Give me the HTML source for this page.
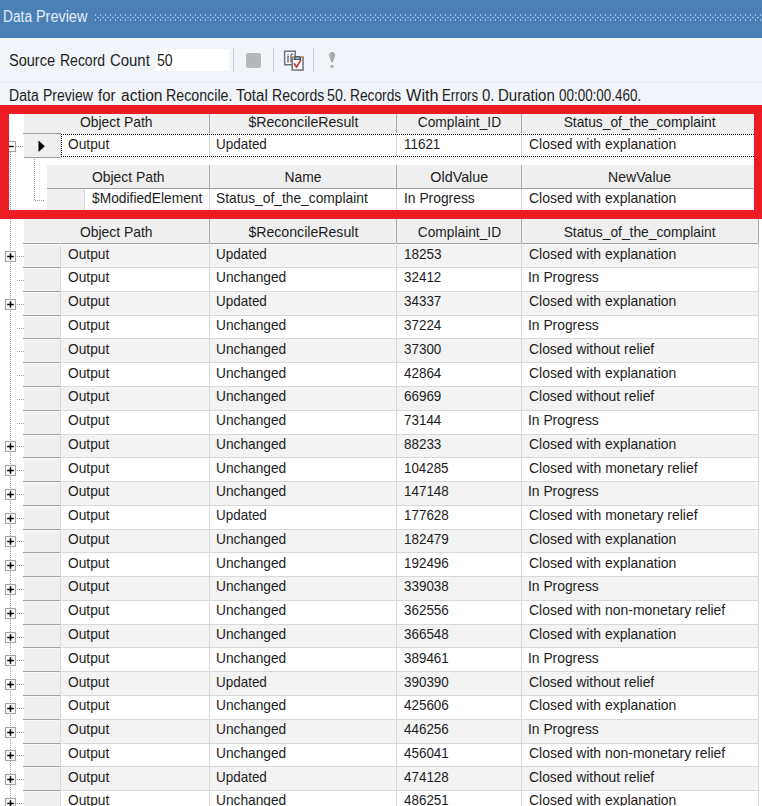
<!DOCTYPE html>
<html><head><meta charset="utf-8"><style>
html,body{margin:0;padding:0;width:762px;height:806px;overflow:hidden;background:#fff}
body{position:relative}
div,span,svg{position:absolute}
span,i{white-space:nowrap;line-height:16px;font-family:"Liberation Sans",sans-serif;font-style:normal;font-size:15px;transform-origin:0 0}
.cw{text-align:center;height:16px}
.cw i{display:inline-block;position:static;transform-origin:50% 0}
.g{color:#1c1c1c}
</style></head><body>
<div style="left:0px;top:0px;width:762px;height:38px;background:#4b80b7;"></div>
<span style="left:2.64px;top:8.5px;transform:scaleX(0.8606);color:#e2ecf7;font-size:16px">Data</span>
<span style="left:36.1px;top:8.5px;transform:scaleX(0.9018);color:#e2ecf7;font-size:16px">Preview</span>
<svg style="left:0;top:0" width="762" height="38"><defs><pattern id="dp" x="0" y="0" width="5" height="38" patternUnits="userSpaceOnUse"><rect x="0" y="14" width="1" height="2" fill="#9ec6ee"/><rect x="2" y="17" width="2" height="1" fill="#9ec6ee"/><rect x="0" y="19" width="1" height="2" fill="#9ec6ee"/></pattern></defs><rect x="95" y="0" width="667" height="38" fill="url(#dp)"/></svg>
<div style="left:0px;top:38px;width:762px;height:67px;background:#f1f4f8;"></div>
<div style="left:0px;top:82px;width:762px;height:1px;background:#e8ebef;"></div>
<span style="left:9.34px;top:52.5px;transform:scaleX(0.9082);color:#1e1e1e;font-size:16px">Source</span>
<span style="left:59.73px;top:52.5px;transform:scaleX(0.874);color:#1e1e1e;font-size:16px">Record</span>
<span style="left:109.6px;top:52.5px;transform:scaleX(0.9326);color:#1e1e1e;font-size:16px">Count</span>
<div style="left:156px;top:49px;width:73px;height:22px;background:#ffffff;"></div>
<span class="t" style="left:156.62px;top:52.5px;transform:scaleX(0.8765);color:#1e1e1e;font-size:16px">50</span>
<div style="left:232.5px;top:48px;width:1.5px;height:24px;background:#c9ccd0;"></div>
<div style="left:272.5px;top:48px;width:1.5px;height:24px;background:#c9ccd0;"></div>
<div style="left:312.5px;top:48px;width:1.5px;height:24px;background:#c9ccd0;"></div>
<div style="left:246px;top:53px;width:15px;height:15px;background:#b5b7b9;border-radius:2.5px"></div>
<svg style="left:282px;top:48px" width="24" height="24" viewBox="0 0 24 24">
<rect x="2.65" y="3.25" width="10.6" height="13.5" fill="#fff" stroke="#6b737c" stroke-width="1.5"/>
<rect x="5.1" y="7.6" width="1.8" height="7" fill="#7d848c"/><rect x="5.1" y="6.1" width="1.8" height="1" fill="#9aa0a6"/>
<path d="M9 14.6 V7.2 q0 -1 1.2 -1 h1" stroke="#7d848c" stroke-width="1.7" fill="none"/>
<rect x="10.15" y="8.95" width="10.9" height="13.1" fill="#fff" stroke="#6b737c" stroke-width="1.5"/>
<path d="M9.4 8.7 h3 M18.6 8.7 h3.2" stroke="#e2a25e" stroke-width="1.3"/>
<path d="M12.2 11.4 C12.2 7.6 18.6 7.6 18.6 11.4 Z" fill="#c4d4e4" stroke="#454b52" stroke-width="1.3"/>
<path d="M12.1 15.3 L14.5 19 L19 11.9" stroke="#d42630" stroke-width="1.6" fill="none"/>
</svg>
<svg style="left:326px;top:50px" width="12" height="20" viewBox="0 0 12 20">
<defs><linearGradient id="eg" x1="0" y1="0" x2="1" y2="0"><stop offset="0" stop-color="#c4c6c8"/><stop offset="0.55" stop-color="#a2a4a7"/><stop offset="1" stop-color="#b4b6b8"/></linearGradient></defs>
<path d="M2.7 4.6 C2.7 1.2 9.3 1.2 9.3 4.6 C9.3 7 7.3 9.8 6.7 12.6 h-1.4 C4.7 9.8 2.7 7 2.7 4.6 Z" fill="url(#eg)"/>
<ellipse cx="6.1" cy="16.4" rx="1.75" ry="1.45" fill="#a6a8ab"/>
</svg>
<span style="left:8.92px;top:87.5px;transform:scaleX(0.8788);color:#1e1e1e;font-size:16px">Data</span>
<span style="left:42.92px;top:87.5px;transform:scaleX(0.8768);color:#1e1e1e;font-size:16px">Preview</span>
<span style="left:97.9px;top:87.5px;transform:scaleX(0.9368);color:#1e1e1e;font-size:16px">for</span>
<span style="left:120.7px;top:87.5px;transform:scaleX(0.9714);color:#1e1e1e;font-size:16px">action</span>
<span style="left:165.61px;top:87.5px;transform:scaleX(0.889);color:#1e1e1e;font-size:16px">Reconcile.</span>
<span style="left:236.4px;top:87.5px;transform:scaleX(0.9394);color:#1e1e1e;font-size:16px">Total</span>
<span style="left:271.52px;top:87.5px;transform:scaleX(0.8776);color:#1e1e1e;font-size:16px">Records</span>
<span style="left:327.41px;top:87.5px;transform:scaleX(0.89);color:#1e1e1e;font-size:16px">50.</span>
<span style="left:350.24px;top:87.5px;transform:scaleX(0.8586);color:#1e1e1e;font-size:16px">Records</span>
<span style="left:405.9px;top:87.5px;transform:scaleX(1.0194);color:#1e1e1e;font-size:16px">With</span>
<span style="left:441.67px;top:87.5px;transform:scaleX(0.831);color:#1e1e1e;font-size:16px">Errors</span>
<span style="left:482.4px;top:87.5px;transform:scaleX(0.9333);color:#1e1e1e;font-size:16px">0.</span>
<span style="left:497.66px;top:87.5px;transform:scaleX(0.939);color:#1e1e1e;font-size:16px">Duration</span>
<span style="left:559.0px;top:87.5px;transform:scaleX(0.8392);color:#1e1e1e;font-size:16px">00:00:00.460.</span>
<div style="left:9px;top:114px;width:745px;height:96px;background:#ffffff;"></div>
<div style="left:24px;top:114px;width:735px;height:19px;background:#efefef;"></div>
<div style="left:24px;top:133px;width:735px;height:1px;background:#f6f6f6;"></div>
<div style="left:23px;top:133px;width:38px;height:1px;background:#a0a0a0;"></div>
<div style="left:209px;top:114px;width:1px;height:19px;background:#aaaaaa;"></div>
<div style="left:396px;top:114px;width:1px;height:19px;background:#aaaaaa;"></div>
<div style="left:521px;top:114px;width:1px;height:19px;background:#aaaaaa;"></div>
<div class="cw" style="left:24px;width:185px;top:112.5px"><i class="g" style="transform:scaleX(0.9256)">Object Path</i></div>
<div class="cw" style="left:210px;width:186px;top:112.5px"><i class="g" style="transform:scaleX(0.9419)">$ReconcileResult</i></div>
<div class="cw" style="left:397px;width:124px;top:112.5px"><i class="g" style="transform:scaleX(0.9165)">Complaint_ID</i></div>
<div class="cw" style="left:522px;width:236px;top:112.5px"><i class="g" style="transform:scaleX(0.9195)">Status_of_the_complaint</i></div>
<div style="left:24px;top:134px;width:36px;height:23px;background:#efefef;"></div>
<div style="left:24px;top:157px;width:36px;height:1px;background:#a0a0a0;"></div>
<div style="left:60px;top:134px;width:1px;height:24px;background:#d8d8d8;"></div>
<svg style="left:38px;top:140px" width="8" height="13"><path d="M0.5 0.5 L6.8 6.2 L0.5 12 Z" fill="#000"/></svg>
<div style="left:209px;top:134px;width:1px;height:23px;background:#d8d8d8;"></div>
<div style="left:396px;top:134px;width:1px;height:23px;background:#d8d8d8;"></div>
<div style="left:521px;top:134px;width:1px;height:23px;background:#d8d8d8;"></div>
<div style="left:61px;top:134px;width:700px;height:1px;background:repeating-linear-gradient(90deg,#000 0 1px,transparent 1px 2px)"></div>
<div style="left:61px;top:156px;width:700px;height:1px;background:repeating-linear-gradient(90deg,#000 0 1px,transparent 1px 2px)"></div>
<div style="left:61px;top:134px;width:1px;height:23px;background:repeating-linear-gradient(180deg,#000 0 1px,transparent 1px 2px)"></div>
<span class="g" style="left:68.0px;top:136.2px;transform:scaleX(0.9156);">Output</span>
<span class="g" style="left:216.1px;top:136.2px;transform:scaleX(0.8964);">Updated</span>
<span class="g" style="left:403.91px;top:136.2px;transform:scaleX(0.895);">11621</span>
<span class="g" style="left:529.0px;top:136.2px;transform:scaleX(0.9297);">Closed with explanation</span>
<svg style="left:4px;top:140px" width="13" height="13"><rect x="1.5" y="1.5" width="10" height="10" fill="#fff" stroke="#a4a4a4" stroke-width="1.1"/><path d="M3.2 6.5 H9.8" stroke="#000" stroke-width="1.4"/></svg>
<div style="left:47px;top:165px;width:707px;height:23px;background:#efefef;"></div>
<div style="left:47px;top:188px;width:707px;height:1px;background:#a0a0a0;"></div>
<div style="left:209px;top:165px;width:1px;height:23px;background:#aaaaaa;"></div>
<div style="left:396px;top:165px;width:1px;height:23px;background:#aaaaaa;"></div>
<div style="left:521px;top:165px;width:1px;height:23px;background:#aaaaaa;"></div>
<div class="cw" style="left:47px;width:162px;top:168px"><i class="g" style="transform:scaleX(0.9256)">Object Path</i></div>
<div class="cw" style="left:210px;width:186px;top:168px"><i class="g" style="transform:scaleX(0.9205)">Name</i></div>
<div class="cw" style="left:397px;width:124px;top:168px"><i class="g" style="transform:scaleX(0.955)">OldValue</i></div>
<div class="cw" style="left:522px;width:236px;top:168px"><i class="g" style="transform:scaleX(0.9379)">NewValue</i></div>
<div style="left:47px;top:189px;width:37px;height:21px;background:#efefef;"></div>
<div style="left:84px;top:189px;width:1px;height:21px;background:#d8d8d8;"></div>
<div style="left:209px;top:189px;width:1px;height:21px;background:#d8d8d8;"></div>
<div style="left:396px;top:189px;width:1px;height:21px;background:#d8d8d8;"></div>
<div style="left:521px;top:189px;width:1px;height:21px;background:#d8d8d8;"></div>
<span class="g" style="left:91.5px;top:190px;transform:scaleX(0.9192);">$ModifiedElement</span>
<span class="g" style="left:216.08px;top:190px;transform:scaleX(0.9195);">Status_of_the_complaint</span>
<span class="g" style="left:403.88px;top:190px;transform:scaleX(0.9224);">In Progress</span>
<span class="g" style="left:529.0px;top:190px;transform:scaleX(0.9297);">Closed with explanation</span>
<div style="left:10px;top:152px;width:1px;height:60px;background:repeating-linear-gradient(180deg,#a0a0a0 0 1px,transparent 1px 2px)"></div>
<div style="left:16px;top:146px;width:7px;height:1px;background:repeating-linear-gradient(90deg,#a0a0a0 0 1px,transparent 1px 2px)"></div>
<div style="left:34px;top:159px;width:1px;height:42px;background:repeating-linear-gradient(180deg,#a0a0a0 0 1px,transparent 1px 2px)"></div>
<div style="left:35px;top:200px;width:10px;height:1px;background:repeating-linear-gradient(90deg,#a0a0a0 0 1px,transparent 1px 2px)"></div>
<div style="left:0px;top:105px;width:762px;height:9px;background:#ec1c24;"></div>
<div style="left:0px;top:210px;width:762px;height:9px;background:#ec1c24;"></div>
<div style="left:0px;top:105px;width:9px;height:114px;background:#ec1c24;"></div>
<div style="left:754px;top:105px;width:8px;height:114px;background:#ec1c24;"></div>
<div style="left:0px;top:219px;width:762px;height:587px;background:#ffffff;"></div>
<div style="left:24px;top:219px;width:735px;height:24px;background:#efefef;"></div>
<div style="left:758px;top:219px;width:1px;height:24px;background:#aaaaaa;"></div>
<div style="left:209px;top:219px;width:1px;height:24px;background:#aaaaaa;"></div>
<div style="left:396px;top:219px;width:1px;height:24px;background:#aaaaaa;"></div>
<div style="left:521px;top:219px;width:1px;height:24px;background:#aaaaaa;"></div>
<div style="left:24px;top:243px;width:735px;height:1px;background:#a0a0a0;"></div>
<div class="cw" style="left:24px;width:185px;top:222.5px"><i class="g" style="transform:scaleX(0.9256)">Object Path</i></div>
<div class="cw" style="left:210px;width:186px;top:222.5px"><i class="g" style="transform:scaleX(0.9419)">$ReconcileResult</i></div>
<div class="cw" style="left:397px;width:124px;top:222.5px"><i class="g" style="transform:scaleX(0.9165)">Complaint_ID</i></div>
<div class="cw" style="left:522px;width:236px;top:222.5px"><i class="g" style="transform:scaleX(0.9195)">Status_of_the_complaint</i></div>
<div style="left:10px;top:219px;width:1px;height:590px;background:repeating-linear-gradient(180deg,#a0a0a0 0 1px,transparent 1px 2px)"></div>
<div style="left:24px;top:243px;width:36px;height:24px;background:#efefef;"></div>
<div style="left:24px;top:244px;width:36px;height:1px;background:#f8f8f8;"></div>
<div style="left:22.5px;top:243px;width:37.5px;height:1px;background:#a0a0a0;"></div>
<div style="left:60px;top:243px;width:1px;height:24px;background:#d8d8d8;"></div>
<div style="left:61px;top:243px;width:697px;height:24px;background:#f3f3f3;"></div>
<div style="left:61px;top:243px;width:697px;height:1px;background:#a0a0a0;"></div>
<div style="left:24px;top:244px;width:735px;height:1px;background:#f9f9f9;"></div>
<div style="left:209px;top:243px;width:1px;height:24px;background:#d8d8d8;"></div>
<div style="left:396px;top:243px;width:1px;height:24px;background:#d8d8d8;"></div>
<div style="left:521px;top:243px;width:1px;height:24px;background:#d8d8d8;"></div>
<div style="left:758px;top:243px;width:1px;height:24px;background:#d8d8d8;"></div>
<span class="g" style="left:67.6px;top:245.7px;transform:scaleX(0.9156);">Output</span>
<span class="g" style="left:216.1px;top:245.7px;transform:scaleX(0.8964);">Updated</span>
<span class="g" style="left:403.9px;top:245.7px;transform:scaleX(0.9025);">18253</span>
<span class="g" style="left:529.0px;top:245.7px;transform:scaleX(0.9297);">Closed with explanation</span>
<div style="left:17px;top:256px;width:7px;height:1px;background:repeating-linear-gradient(90deg,#a0a0a0 0 1px,transparent 1px 2px)"></div>
<svg style="left:4px;top:250px" width="13" height="13"><rect x="1.5" y="1.5" width="10" height="10" fill="#fff" stroke="#a4a4a4" stroke-width="1.1"/><path d="M3.2 6.5 H9.8 M6.5 3.2 V9.8" stroke="#000" stroke-width="1.55"/></svg>
<div style="left:24px;top:267px;width:36px;height:24px;background:#efefef;"></div>
<div style="left:24px;top:268px;width:36px;height:1px;background:#f8f8f8;"></div>
<div style="left:22.5px;top:267px;width:37.5px;height:1px;background:#a0a0a0;"></div>
<div style="left:60px;top:267px;width:1px;height:24px;background:#d8d8d8;"></div>
<div style="left:61px;top:267px;width:697px;height:24px;background:#ffffff;"></div>
<div style="left:61px;top:267px;width:697px;height:1px;background:#d8d8d8;"></div>
<div style="left:209px;top:267px;width:1px;height:24px;background:#d8d8d8;"></div>
<div style="left:396px;top:267px;width:1px;height:24px;background:#d8d8d8;"></div>
<div style="left:521px;top:267px;width:1px;height:24px;background:#d8d8d8;"></div>
<div style="left:758px;top:267px;width:1px;height:24px;background:#d8d8d8;"></div>
<span class="g" style="left:67.6px;top:269.47px;transform:scaleX(0.9156);">Output</span>
<span class="g" style="left:216.09px;top:269.47px;transform:scaleX(0.9147);">Unchanged</span>
<span class="g" style="left:403.91px;top:269.47px;transform:scaleX(0.895);">32412</span>
<span class="g" style="left:528.08px;top:269.47px;transform:scaleX(0.9224);">In Progress</span>
<div style="left:17px;top:280px;width:7px;height:1px;background:repeating-linear-gradient(90deg,#a0a0a0 0 1px,transparent 1px 2px)"></div>
<div style="left:24px;top:291px;width:36px;height:24px;background:#efefef;"></div>
<div style="left:24px;top:292px;width:36px;height:1px;background:#f8f8f8;"></div>
<div style="left:22.5px;top:291px;width:37.5px;height:1px;background:#a0a0a0;"></div>
<div style="left:60px;top:291px;width:1px;height:24px;background:#d8d8d8;"></div>
<div style="left:61px;top:291px;width:697px;height:24px;background:#f3f3f3;"></div>
<div style="left:61px;top:291px;width:697px;height:1px;background:#d8d8d8;"></div>
<div style="left:209px;top:291px;width:1px;height:24px;background:#d8d8d8;"></div>
<div style="left:396px;top:291px;width:1px;height:24px;background:#d8d8d8;"></div>
<div style="left:521px;top:291px;width:1px;height:24px;background:#d8d8d8;"></div>
<div style="left:758px;top:291px;width:1px;height:24px;background:#d8d8d8;"></div>
<span class="g" style="left:67.6px;top:293.24px;transform:scaleX(0.9156);">Output</span>
<span class="g" style="left:216.1px;top:293.24px;transform:scaleX(0.8964);">Updated</span>
<span class="g" style="left:403.91px;top:293.24px;transform:scaleX(0.895);">34337</span>
<span class="g" style="left:529.0px;top:293.24px;transform:scaleX(0.9297);">Closed with explanation</span>
<div style="left:17px;top:304px;width:7px;height:1px;background:repeating-linear-gradient(90deg,#a0a0a0 0 1px,transparent 1px 2px)"></div>
<svg style="left:4px;top:298px" width="13" height="13"><rect x="1.5" y="1.5" width="10" height="10" fill="#fff" stroke="#a4a4a4" stroke-width="1.1"/><path d="M3.2 6.5 H9.8 M6.5 3.2 V9.8" stroke="#000" stroke-width="1.55"/></svg>
<div style="left:24px;top:315px;width:36px;height:23px;background:#efefef;"></div>
<div style="left:24px;top:316px;width:36px;height:1px;background:#f8f8f8;"></div>
<div style="left:22.5px;top:315px;width:37.5px;height:1px;background:#a0a0a0;"></div>
<div style="left:60px;top:315px;width:1px;height:23px;background:#d8d8d8;"></div>
<div style="left:61px;top:315px;width:697px;height:23px;background:#ffffff;"></div>
<div style="left:61px;top:315px;width:697px;height:1px;background:#d8d8d8;"></div>
<div style="left:209px;top:315px;width:1px;height:23px;background:#d8d8d8;"></div>
<div style="left:396px;top:315px;width:1px;height:23px;background:#d8d8d8;"></div>
<div style="left:521px;top:315px;width:1px;height:23px;background:#d8d8d8;"></div>
<div style="left:758px;top:315px;width:1px;height:23px;background:#d8d8d8;"></div>
<span class="g" style="left:67.6px;top:317.01000000000005px;transform:scaleX(0.9156);">Output</span>
<span class="g" style="left:216.09px;top:317.01000000000005px;transform:scaleX(0.9147);">Unchanged</span>
<span class="g" style="left:403.91px;top:317.01000000000005px;transform:scaleX(0.895);">37224</span>
<span class="g" style="left:528.08px;top:317.01000000000005px;transform:scaleX(0.9224);">In Progress</span>
<div style="left:17px;top:328px;width:7px;height:1px;background:repeating-linear-gradient(90deg,#a0a0a0 0 1px,transparent 1px 2px)"></div>
<div style="left:24px;top:338px;width:36px;height:24px;background:#efefef;"></div>
<div style="left:24px;top:339px;width:36px;height:1px;background:#f8f8f8;"></div>
<div style="left:22.5px;top:338px;width:37.5px;height:1px;background:#a0a0a0;"></div>
<div style="left:60px;top:338px;width:1px;height:24px;background:#d8d8d8;"></div>
<div style="left:61px;top:338px;width:697px;height:24px;background:#f3f3f3;"></div>
<div style="left:61px;top:338px;width:697px;height:1px;background:#d8d8d8;"></div>
<div style="left:209px;top:338px;width:1px;height:24px;background:#d8d8d8;"></div>
<div style="left:396px;top:338px;width:1px;height:24px;background:#d8d8d8;"></div>
<div style="left:521px;top:338px;width:1px;height:24px;background:#d8d8d8;"></div>
<div style="left:758px;top:338px;width:1px;height:24px;background:#d8d8d8;"></div>
<span class="g" style="left:67.6px;top:340.78000000000003px;transform:scaleX(0.9156);">Output</span>
<span class="g" style="left:216.09px;top:340.78000000000003px;transform:scaleX(0.9147);">Unchanged</span>
<span class="g" style="left:403.91px;top:340.78000000000003px;transform:scaleX(0.895);">37300</span>
<span class="g" style="left:529.0px;top:340.78000000000003px;transform:scaleX(0.9272);">Closed without relief</span>
<div style="left:17px;top:351px;width:7px;height:1px;background:repeating-linear-gradient(90deg,#a0a0a0 0 1px,transparent 1px 2px)"></div>
<div style="left:24px;top:362px;width:36px;height:24px;background:#efefef;"></div>
<div style="left:24px;top:363px;width:36px;height:1px;background:#f8f8f8;"></div>
<div style="left:22.5px;top:362px;width:37.5px;height:1px;background:#a0a0a0;"></div>
<div style="left:60px;top:362px;width:1px;height:24px;background:#d8d8d8;"></div>
<div style="left:61px;top:362px;width:697px;height:24px;background:#ffffff;"></div>
<div style="left:61px;top:362px;width:697px;height:1px;background:#d8d8d8;"></div>
<div style="left:209px;top:362px;width:1px;height:24px;background:#d8d8d8;"></div>
<div style="left:396px;top:362px;width:1px;height:24px;background:#d8d8d8;"></div>
<div style="left:521px;top:362px;width:1px;height:24px;background:#d8d8d8;"></div>
<div style="left:758px;top:362px;width:1px;height:24px;background:#d8d8d8;"></div>
<span class="g" style="left:67.6px;top:364.55px;transform:scaleX(0.9156);">Output</span>
<span class="g" style="left:216.09px;top:364.55px;transform:scaleX(0.9147);">Unchanged</span>
<span class="g" style="left:403.91px;top:364.55px;transform:scaleX(0.895);">42864</span>
<span class="g" style="left:529.0px;top:364.55px;transform:scaleX(0.9297);">Closed with explanation</span>
<div style="left:17px;top:375px;width:7px;height:1px;background:repeating-linear-gradient(90deg,#a0a0a0 0 1px,transparent 1px 2px)"></div>
<div style="left:24px;top:386px;width:36px;height:24px;background:#efefef;"></div>
<div style="left:24px;top:387px;width:36px;height:1px;background:#f8f8f8;"></div>
<div style="left:22.5px;top:386px;width:37.5px;height:1px;background:#a0a0a0;"></div>
<div style="left:60px;top:386px;width:1px;height:24px;background:#d8d8d8;"></div>
<div style="left:61px;top:386px;width:697px;height:24px;background:#f3f3f3;"></div>
<div style="left:61px;top:386px;width:697px;height:1px;background:#d8d8d8;"></div>
<div style="left:209px;top:386px;width:1px;height:24px;background:#d8d8d8;"></div>
<div style="left:396px;top:386px;width:1px;height:24px;background:#d8d8d8;"></div>
<div style="left:521px;top:386px;width:1px;height:24px;background:#d8d8d8;"></div>
<div style="left:758px;top:386px;width:1px;height:24px;background:#d8d8d8;"></div>
<span class="g" style="left:67.6px;top:388.32px;transform:scaleX(0.9156);">Output</span>
<span class="g" style="left:216.09px;top:388.32px;transform:scaleX(0.9147);">Unchanged</span>
<span class="g" style="left:403.91px;top:388.32px;transform:scaleX(0.895);">66969</span>
<span class="g" style="left:529.0px;top:388.32px;transform:scaleX(0.9272);">Closed without relief</span>
<div style="left:17px;top:399px;width:7px;height:1px;background:repeating-linear-gradient(90deg,#a0a0a0 0 1px,transparent 1px 2px)"></div>
<div style="left:24px;top:410px;width:36px;height:24px;background:#efefef;"></div>
<div style="left:24px;top:411px;width:36px;height:1px;background:#f8f8f8;"></div>
<div style="left:22.5px;top:410px;width:37.5px;height:1px;background:#a0a0a0;"></div>
<div style="left:60px;top:410px;width:1px;height:24px;background:#d8d8d8;"></div>
<div style="left:61px;top:410px;width:697px;height:24px;background:#ffffff;"></div>
<div style="left:61px;top:410px;width:697px;height:1px;background:#d8d8d8;"></div>
<div style="left:209px;top:410px;width:1px;height:24px;background:#d8d8d8;"></div>
<div style="left:396px;top:410px;width:1px;height:24px;background:#d8d8d8;"></div>
<div style="left:521px;top:410px;width:1px;height:24px;background:#d8d8d8;"></div>
<div style="left:758px;top:410px;width:1px;height:24px;background:#d8d8d8;"></div>
<span class="g" style="left:67.6px;top:412.09px;transform:scaleX(0.9156);">Output</span>
<span class="g" style="left:216.09px;top:412.09px;transform:scaleX(0.9147);">Unchanged</span>
<span class="g" style="left:403.91px;top:412.09px;transform:scaleX(0.895);">73144</span>
<span class="g" style="left:528.08px;top:412.09px;transform:scaleX(0.9224);">In Progress</span>
<div style="left:17px;top:423px;width:7px;height:1px;background:repeating-linear-gradient(90deg,#a0a0a0 0 1px,transparent 1px 2px)"></div>
<div style="left:24px;top:434px;width:36px;height:23px;background:#efefef;"></div>
<div style="left:24px;top:435px;width:36px;height:1px;background:#f8f8f8;"></div>
<div style="left:22.5px;top:434px;width:37.5px;height:1px;background:#a0a0a0;"></div>
<div style="left:60px;top:434px;width:1px;height:23px;background:#d8d8d8;"></div>
<div style="left:61px;top:434px;width:697px;height:23px;background:#f3f3f3;"></div>
<div style="left:61px;top:434px;width:697px;height:1px;background:#d8d8d8;"></div>
<div style="left:209px;top:434px;width:1px;height:23px;background:#d8d8d8;"></div>
<div style="left:396px;top:434px;width:1px;height:23px;background:#d8d8d8;"></div>
<div style="left:521px;top:434px;width:1px;height:23px;background:#d8d8d8;"></div>
<div style="left:758px;top:434px;width:1px;height:23px;background:#d8d8d8;"></div>
<span class="g" style="left:67.6px;top:435.86px;transform:scaleX(0.9156);">Output</span>
<span class="g" style="left:216.09px;top:435.86px;transform:scaleX(0.9147);">Unchanged</span>
<span class="g" style="left:403.91px;top:435.86px;transform:scaleX(0.895);">88233</span>
<span class="g" style="left:529.0px;top:435.86px;transform:scaleX(0.9297);">Closed with explanation</span>
<div style="left:17px;top:446px;width:7px;height:1px;background:repeating-linear-gradient(90deg,#a0a0a0 0 1px,transparent 1px 2px)"></div>
<svg style="left:4px;top:440px" width="13" height="13"><rect x="1.5" y="1.5" width="10" height="10" fill="#fff" stroke="#a4a4a4" stroke-width="1.1"/><path d="M3.2 6.5 H9.8 M6.5 3.2 V9.8" stroke="#000" stroke-width="1.55"/></svg>
<div style="left:24px;top:457px;width:36px;height:24px;background:#efefef;"></div>
<div style="left:24px;top:458px;width:36px;height:1px;background:#f8f8f8;"></div>
<div style="left:22.5px;top:457px;width:37.5px;height:1px;background:#a0a0a0;"></div>
<div style="left:60px;top:457px;width:1px;height:24px;background:#d8d8d8;"></div>
<div style="left:61px;top:457px;width:697px;height:24px;background:#ffffff;"></div>
<div style="left:61px;top:457px;width:697px;height:1px;background:#d8d8d8;"></div>
<div style="left:209px;top:457px;width:1px;height:24px;background:#d8d8d8;"></div>
<div style="left:396px;top:457px;width:1px;height:24px;background:#d8d8d8;"></div>
<div style="left:521px;top:457px;width:1px;height:24px;background:#d8d8d8;"></div>
<div style="left:758px;top:457px;width:1px;height:24px;background:#d8d8d8;"></div>
<span class="g" style="left:67.6px;top:459.63000000000005px;transform:scaleX(0.9156);">Output</span>
<span class="g" style="left:216.09px;top:459.63000000000005px;transform:scaleX(0.9147);">Unchanged</span>
<span class="g" style="left:403.91px;top:459.63000000000005px;transform:scaleX(0.8878);">104285</span>
<span class="g" style="left:529.0px;top:459.63000000000005px;transform:scaleX(0.932);">Closed with monetary relief</span>
<div style="left:17px;top:470px;width:7px;height:1px;background:repeating-linear-gradient(90deg,#a0a0a0 0 1px,transparent 1px 2px)"></div>
<svg style="left:4px;top:464px" width="13" height="13"><rect x="1.5" y="1.5" width="10" height="10" fill="#fff" stroke="#a4a4a4" stroke-width="1.1"/><path d="M3.2 6.5 H9.8 M6.5 3.2 V9.8" stroke="#000" stroke-width="1.55"/></svg>
<div style="left:24px;top:481px;width:36px;height:24px;background:#efefef;"></div>
<div style="left:24px;top:482px;width:36px;height:1px;background:#f8f8f8;"></div>
<div style="left:22.5px;top:481px;width:37.5px;height:1px;background:#a0a0a0;"></div>
<div style="left:60px;top:481px;width:1px;height:24px;background:#d8d8d8;"></div>
<div style="left:61px;top:481px;width:697px;height:24px;background:#f3f3f3;"></div>
<div style="left:61px;top:481px;width:697px;height:1px;background:#d8d8d8;"></div>
<div style="left:209px;top:481px;width:1px;height:24px;background:#d8d8d8;"></div>
<div style="left:396px;top:481px;width:1px;height:24px;background:#d8d8d8;"></div>
<div style="left:521px;top:481px;width:1px;height:24px;background:#d8d8d8;"></div>
<div style="left:758px;top:481px;width:1px;height:24px;background:#d8d8d8;"></div>
<span class="g" style="left:67.6px;top:483.40000000000003px;transform:scaleX(0.9156);">Output</span>
<span class="g" style="left:216.09px;top:483.40000000000003px;transform:scaleX(0.9147);">Unchanged</span>
<span class="g" style="left:403.91px;top:483.40000000000003px;transform:scaleX(0.895);">147148</span>
<span class="g" style="left:528.08px;top:483.40000000000003px;transform:scaleX(0.9224);">In Progress</span>
<div style="left:17px;top:494px;width:7px;height:1px;background:repeating-linear-gradient(90deg,#a0a0a0 0 1px,transparent 1px 2px)"></div>
<svg style="left:4px;top:488px" width="13" height="13"><rect x="1.5" y="1.5" width="10" height="10" fill="#fff" stroke="#a4a4a4" stroke-width="1.1"/><path d="M3.2 6.5 H9.8 M6.5 3.2 V9.8" stroke="#000" stroke-width="1.55"/></svg>
<div style="left:24px;top:505px;width:36px;height:24px;background:#efefef;"></div>
<div style="left:24px;top:506px;width:36px;height:1px;background:#f8f8f8;"></div>
<div style="left:22.5px;top:505px;width:37.5px;height:1px;background:#a0a0a0;"></div>
<div style="left:60px;top:505px;width:1px;height:24px;background:#d8d8d8;"></div>
<div style="left:61px;top:505px;width:697px;height:24px;background:#ffffff;"></div>
<div style="left:61px;top:505px;width:697px;height:1px;background:#d8d8d8;"></div>
<div style="left:209px;top:505px;width:1px;height:24px;background:#d8d8d8;"></div>
<div style="left:396px;top:505px;width:1px;height:24px;background:#d8d8d8;"></div>
<div style="left:521px;top:505px;width:1px;height:24px;background:#d8d8d8;"></div>
<div style="left:758px;top:505px;width:1px;height:24px;background:#d8d8d8;"></div>
<span class="g" style="left:67.6px;top:507.16999999999996px;transform:scaleX(0.9156);">Output</span>
<span class="g" style="left:216.1px;top:507.16999999999996px;transform:scaleX(0.8964);">Updated</span>
<span class="g" style="left:403.91px;top:507.16999999999996px;transform:scaleX(0.895);">177628</span>
<span class="g" style="left:529.0px;top:507.16999999999996px;transform:scaleX(0.932);">Closed with monetary relief</span>
<div style="left:17px;top:518px;width:7px;height:1px;background:repeating-linear-gradient(90deg,#a0a0a0 0 1px,transparent 1px 2px)"></div>
<svg style="left:4px;top:512px" width="13" height="13"><rect x="1.5" y="1.5" width="10" height="10" fill="#fff" stroke="#a4a4a4" stroke-width="1.1"/><path d="M3.2 6.5 H9.8 M6.5 3.2 V9.8" stroke="#000" stroke-width="1.55"/></svg>
<div style="left:24px;top:529px;width:36px;height:23px;background:#efefef;"></div>
<div style="left:24px;top:530px;width:36px;height:1px;background:#f8f8f8;"></div>
<div style="left:22.5px;top:529px;width:37.5px;height:1px;background:#a0a0a0;"></div>
<div style="left:60px;top:529px;width:1px;height:23px;background:#d8d8d8;"></div>
<div style="left:61px;top:529px;width:697px;height:23px;background:#f3f3f3;"></div>
<div style="left:61px;top:529px;width:697px;height:1px;background:#d8d8d8;"></div>
<div style="left:209px;top:529px;width:1px;height:23px;background:#d8d8d8;"></div>
<div style="left:396px;top:529px;width:1px;height:23px;background:#d8d8d8;"></div>
<div style="left:521px;top:529px;width:1px;height:23px;background:#d8d8d8;"></div>
<div style="left:758px;top:529px;width:1px;height:23px;background:#d8d8d8;"></div>
<span class="g" style="left:67.6px;top:530.9399999999999px;transform:scaleX(0.9156);">Output</span>
<span class="g" style="left:216.09px;top:530.9399999999999px;transform:scaleX(0.9147);">Unchanged</span>
<span class="g" style="left:403.91px;top:530.9399999999999px;transform:scaleX(0.895);">182479</span>
<span class="g" style="left:529.0px;top:530.9399999999999px;transform:scaleX(0.9297);">Closed with explanation</span>
<div style="left:17px;top:541px;width:7px;height:1px;background:repeating-linear-gradient(90deg,#a0a0a0 0 1px,transparent 1px 2px)"></div>
<svg style="left:4px;top:535px" width="13" height="13"><rect x="1.5" y="1.5" width="10" height="10" fill="#fff" stroke="#a4a4a4" stroke-width="1.1"/><path d="M3.2 6.5 H9.8 M6.5 3.2 V9.8" stroke="#000" stroke-width="1.55"/></svg>
<div style="left:24px;top:552px;width:36px;height:24px;background:#efefef;"></div>
<div style="left:24px;top:553px;width:36px;height:1px;background:#f8f8f8;"></div>
<div style="left:22.5px;top:552px;width:37.5px;height:1px;background:#a0a0a0;"></div>
<div style="left:60px;top:552px;width:1px;height:24px;background:#d8d8d8;"></div>
<div style="left:61px;top:552px;width:697px;height:24px;background:#ffffff;"></div>
<div style="left:61px;top:552px;width:697px;height:1px;background:#d8d8d8;"></div>
<div style="left:209px;top:552px;width:1px;height:24px;background:#d8d8d8;"></div>
<div style="left:396px;top:552px;width:1px;height:24px;background:#d8d8d8;"></div>
<div style="left:521px;top:552px;width:1px;height:24px;background:#d8d8d8;"></div>
<div style="left:758px;top:552px;width:1px;height:24px;background:#d8d8d8;"></div>
<span class="g" style="left:67.6px;top:554.7099999999999px;transform:scaleX(0.9156);">Output</span>
<span class="g" style="left:216.09px;top:554.7099999999999px;transform:scaleX(0.9147);">Unchanged</span>
<span class="g" style="left:403.91px;top:554.7099999999999px;transform:scaleX(0.895);">192496</span>
<span class="g" style="left:529.0px;top:554.7099999999999px;transform:scaleX(0.9297);">Closed with explanation</span>
<div style="left:17px;top:565px;width:7px;height:1px;background:repeating-linear-gradient(90deg,#a0a0a0 0 1px,transparent 1px 2px)"></div>
<svg style="left:4px;top:559px" width="13" height="13"><rect x="1.5" y="1.5" width="10" height="10" fill="#fff" stroke="#a4a4a4" stroke-width="1.1"/><path d="M3.2 6.5 H9.8 M6.5 3.2 V9.8" stroke="#000" stroke-width="1.55"/></svg>
<div style="left:24px;top:576px;width:36px;height:24px;background:#efefef;"></div>
<div style="left:24px;top:577px;width:36px;height:1px;background:#f8f8f8;"></div>
<div style="left:22.5px;top:576px;width:37.5px;height:1px;background:#a0a0a0;"></div>
<div style="left:60px;top:576px;width:1px;height:24px;background:#d8d8d8;"></div>
<div style="left:61px;top:576px;width:697px;height:24px;background:#f3f3f3;"></div>
<div style="left:61px;top:576px;width:697px;height:1px;background:#d8d8d8;"></div>
<div style="left:209px;top:576px;width:1px;height:24px;background:#d8d8d8;"></div>
<div style="left:396px;top:576px;width:1px;height:24px;background:#d8d8d8;"></div>
<div style="left:521px;top:576px;width:1px;height:24px;background:#d8d8d8;"></div>
<div style="left:758px;top:576px;width:1px;height:24px;background:#d8d8d8;"></div>
<span class="g" style="left:67.6px;top:578.4799999999999px;transform:scaleX(0.9156);">Output</span>
<span class="g" style="left:216.09px;top:578.4799999999999px;transform:scaleX(0.9147);">Unchanged</span>
<span class="g" style="left:403.91px;top:578.4799999999999px;transform:scaleX(0.895);">339038</span>
<span class="g" style="left:528.08px;top:578.4799999999999px;transform:scaleX(0.9224);">In Progress</span>
<div style="left:17px;top:589px;width:7px;height:1px;background:repeating-linear-gradient(90deg,#a0a0a0 0 1px,transparent 1px 2px)"></div>
<svg style="left:4px;top:583px" width="13" height="13"><rect x="1.5" y="1.5" width="10" height="10" fill="#fff" stroke="#a4a4a4" stroke-width="1.1"/><path d="M3.2 6.5 H9.8 M6.5 3.2 V9.8" stroke="#000" stroke-width="1.55"/></svg>
<div style="left:24px;top:600px;width:36px;height:24px;background:#efefef;"></div>
<div style="left:24px;top:601px;width:36px;height:1px;background:#f8f8f8;"></div>
<div style="left:22.5px;top:600px;width:37.5px;height:1px;background:#a0a0a0;"></div>
<div style="left:60px;top:600px;width:1px;height:24px;background:#d8d8d8;"></div>
<div style="left:61px;top:600px;width:697px;height:24px;background:#ffffff;"></div>
<div style="left:61px;top:600px;width:697px;height:1px;background:#d8d8d8;"></div>
<div style="left:209px;top:600px;width:1px;height:24px;background:#d8d8d8;"></div>
<div style="left:396px;top:600px;width:1px;height:24px;background:#d8d8d8;"></div>
<div style="left:521px;top:600px;width:1px;height:24px;background:#d8d8d8;"></div>
<div style="left:758px;top:600px;width:1px;height:24px;background:#d8d8d8;"></div>
<span class="g" style="left:67.6px;top:602.25px;transform:scaleX(0.9156);">Output</span>
<span class="g" style="left:216.09px;top:602.25px;transform:scaleX(0.9147);">Unchanged</span>
<span class="g" style="left:403.91px;top:602.25px;transform:scaleX(0.895);">362556</span>
<span class="g" style="left:529.0px;top:602.25px;transform:scaleX(0.9303);">Closed with non-monetary relief</span>
<div style="left:17px;top:613px;width:7px;height:1px;background:repeating-linear-gradient(90deg,#a0a0a0 0 1px,transparent 1px 2px)"></div>
<svg style="left:4px;top:607px" width="13" height="13"><rect x="1.5" y="1.5" width="10" height="10" fill="#fff" stroke="#a4a4a4" stroke-width="1.1"/><path d="M3.2 6.5 H9.8 M6.5 3.2 V9.8" stroke="#000" stroke-width="1.55"/></svg>
<div style="left:24px;top:624px;width:36px;height:23px;background:#efefef;"></div>
<div style="left:24px;top:625px;width:36px;height:1px;background:#f8f8f8;"></div>
<div style="left:22.5px;top:624px;width:37.5px;height:1px;background:#a0a0a0;"></div>
<div style="left:60px;top:624px;width:1px;height:23px;background:#d8d8d8;"></div>
<div style="left:61px;top:624px;width:697px;height:23px;background:#f3f3f3;"></div>
<div style="left:61px;top:624px;width:697px;height:1px;background:#d8d8d8;"></div>
<div style="left:209px;top:624px;width:1px;height:23px;background:#d8d8d8;"></div>
<div style="left:396px;top:624px;width:1px;height:23px;background:#d8d8d8;"></div>
<div style="left:521px;top:624px;width:1px;height:23px;background:#d8d8d8;"></div>
<div style="left:758px;top:624px;width:1px;height:23px;background:#d8d8d8;"></div>
<span class="g" style="left:67.6px;top:626.02px;transform:scaleX(0.9156);">Output</span>
<span class="g" style="left:216.09px;top:626.02px;transform:scaleX(0.9147);">Unchanged</span>
<span class="g" style="left:403.91px;top:626.02px;transform:scaleX(0.895);">366548</span>
<span class="g" style="left:529.0px;top:626.02px;transform:scaleX(0.9297);">Closed with explanation</span>
<div style="left:17px;top:637px;width:7px;height:1px;background:repeating-linear-gradient(90deg,#a0a0a0 0 1px,transparent 1px 2px)"></div>
<svg style="left:4px;top:631px" width="13" height="13"><rect x="1.5" y="1.5" width="10" height="10" fill="#fff" stroke="#a4a4a4" stroke-width="1.1"/><path d="M3.2 6.5 H9.8 M6.5 3.2 V9.8" stroke="#000" stroke-width="1.55"/></svg>
<div style="left:24px;top:647px;width:36px;height:24px;background:#efefef;"></div>
<div style="left:24px;top:648px;width:36px;height:1px;background:#f8f8f8;"></div>
<div style="left:22.5px;top:647px;width:37.5px;height:1px;background:#a0a0a0;"></div>
<div style="left:60px;top:647px;width:1px;height:24px;background:#d8d8d8;"></div>
<div style="left:61px;top:647px;width:697px;height:24px;background:#ffffff;"></div>
<div style="left:61px;top:647px;width:697px;height:1px;background:#d8d8d8;"></div>
<div style="left:209px;top:647px;width:1px;height:24px;background:#d8d8d8;"></div>
<div style="left:396px;top:647px;width:1px;height:24px;background:#d8d8d8;"></div>
<div style="left:521px;top:647px;width:1px;height:24px;background:#d8d8d8;"></div>
<div style="left:758px;top:647px;width:1px;height:24px;background:#d8d8d8;"></div>
<span class="g" style="left:67.6px;top:649.79px;transform:scaleX(0.9156);">Output</span>
<span class="g" style="left:216.09px;top:649.79px;transform:scaleX(0.9147);">Unchanged</span>
<span class="g" style="left:403.91px;top:649.79px;transform:scaleX(0.895);">389461</span>
<span class="g" style="left:528.08px;top:649.79px;transform:scaleX(0.9224);">In Progress</span>
<div style="left:17px;top:660px;width:7px;height:1px;background:repeating-linear-gradient(90deg,#a0a0a0 0 1px,transparent 1px 2px)"></div>
<svg style="left:4px;top:654px" width="13" height="13"><rect x="1.5" y="1.5" width="10" height="10" fill="#fff" stroke="#a4a4a4" stroke-width="1.1"/><path d="M3.2 6.5 H9.8 M6.5 3.2 V9.8" stroke="#000" stroke-width="1.55"/></svg>
<div style="left:24px;top:671px;width:36px;height:24px;background:#efefef;"></div>
<div style="left:24px;top:672px;width:36px;height:1px;background:#f8f8f8;"></div>
<div style="left:22.5px;top:671px;width:37.5px;height:1px;background:#a0a0a0;"></div>
<div style="left:60px;top:671px;width:1px;height:24px;background:#d8d8d8;"></div>
<div style="left:61px;top:671px;width:697px;height:24px;background:#f3f3f3;"></div>
<div style="left:61px;top:671px;width:697px;height:1px;background:#d8d8d8;"></div>
<div style="left:209px;top:671px;width:1px;height:24px;background:#d8d8d8;"></div>
<div style="left:396px;top:671px;width:1px;height:24px;background:#d8d8d8;"></div>
<div style="left:521px;top:671px;width:1px;height:24px;background:#d8d8d8;"></div>
<div style="left:758px;top:671px;width:1px;height:24px;background:#d8d8d8;"></div>
<span class="g" style="left:67.6px;top:673.56px;transform:scaleX(0.9156);">Output</span>
<span class="g" style="left:216.1px;top:673.56px;transform:scaleX(0.8964);">Updated</span>
<span class="g" style="left:403.91px;top:673.56px;transform:scaleX(0.895);">390390</span>
<span class="g" style="left:529.0px;top:673.56px;transform:scaleX(0.9272);">Closed without relief</span>
<div style="left:17px;top:684px;width:7px;height:1px;background:repeating-linear-gradient(90deg,#a0a0a0 0 1px,transparent 1px 2px)"></div>
<svg style="left:4px;top:678px" width="13" height="13"><rect x="1.5" y="1.5" width="10" height="10" fill="#fff" stroke="#a4a4a4" stroke-width="1.1"/><path d="M3.2 6.5 H9.8 M6.5 3.2 V9.8" stroke="#000" stroke-width="1.55"/></svg>
<div style="left:24px;top:695px;width:36px;height:24px;background:#efefef;"></div>
<div style="left:24px;top:696px;width:36px;height:1px;background:#f8f8f8;"></div>
<div style="left:22.5px;top:695px;width:37.5px;height:1px;background:#a0a0a0;"></div>
<div style="left:60px;top:695px;width:1px;height:24px;background:#d8d8d8;"></div>
<div style="left:61px;top:695px;width:697px;height:24px;background:#ffffff;"></div>
<div style="left:61px;top:695px;width:697px;height:1px;background:#d8d8d8;"></div>
<div style="left:209px;top:695px;width:1px;height:24px;background:#d8d8d8;"></div>
<div style="left:396px;top:695px;width:1px;height:24px;background:#d8d8d8;"></div>
<div style="left:521px;top:695px;width:1px;height:24px;background:#d8d8d8;"></div>
<div style="left:758px;top:695px;width:1px;height:24px;background:#d8d8d8;"></div>
<span class="g" style="left:67.6px;top:697.3299999999999px;transform:scaleX(0.9156);">Output</span>
<span class="g" style="left:216.09px;top:697.3299999999999px;transform:scaleX(0.9147);">Unchanged</span>
<span class="g" style="left:403.91px;top:697.3299999999999px;transform:scaleX(0.895);">425606</span>
<span class="g" style="left:529.0px;top:697.3299999999999px;transform:scaleX(0.9297);">Closed with explanation</span>
<div style="left:17px;top:708px;width:7px;height:1px;background:repeating-linear-gradient(90deg,#a0a0a0 0 1px,transparent 1px 2px)"></div>
<svg style="left:4px;top:702px" width="13" height="13"><rect x="1.5" y="1.5" width="10" height="10" fill="#fff" stroke="#a4a4a4" stroke-width="1.1"/><path d="M3.2 6.5 H9.8 M6.5 3.2 V9.8" stroke="#000" stroke-width="1.55"/></svg>
<div style="left:24px;top:719px;width:36px;height:24px;background:#efefef;"></div>
<div style="left:24px;top:720px;width:36px;height:1px;background:#f8f8f8;"></div>
<div style="left:22.5px;top:719px;width:37.5px;height:1px;background:#a0a0a0;"></div>
<div style="left:60px;top:719px;width:1px;height:24px;background:#d8d8d8;"></div>
<div style="left:61px;top:719px;width:697px;height:24px;background:#f3f3f3;"></div>
<div style="left:61px;top:719px;width:697px;height:1px;background:#d8d8d8;"></div>
<div style="left:209px;top:719px;width:1px;height:24px;background:#d8d8d8;"></div>
<div style="left:396px;top:719px;width:1px;height:24px;background:#d8d8d8;"></div>
<div style="left:521px;top:719px;width:1px;height:24px;background:#d8d8d8;"></div>
<div style="left:758px;top:719px;width:1px;height:24px;background:#d8d8d8;"></div>
<span class="g" style="left:67.6px;top:721.0999999999999px;transform:scaleX(0.9156);">Output</span>
<span class="g" style="left:216.09px;top:721.0999999999999px;transform:scaleX(0.9147);">Unchanged</span>
<span class="g" style="left:403.91px;top:721.0999999999999px;transform:scaleX(0.895);">446256</span>
<span class="g" style="left:528.08px;top:721.0999999999999px;transform:scaleX(0.9224);">In Progress</span>
<div style="left:17px;top:732px;width:7px;height:1px;background:repeating-linear-gradient(90deg,#a0a0a0 0 1px,transparent 1px 2px)"></div>
<svg style="left:4px;top:726px" width="13" height="13"><rect x="1.5" y="1.5" width="10" height="10" fill="#fff" stroke="#a4a4a4" stroke-width="1.1"/><path d="M3.2 6.5 H9.8 M6.5 3.2 V9.8" stroke="#000" stroke-width="1.55"/></svg>
<div style="left:24px;top:743px;width:36px;height:23px;background:#efefef;"></div>
<div style="left:24px;top:744px;width:36px;height:1px;background:#f8f8f8;"></div>
<div style="left:22.5px;top:743px;width:37.5px;height:1px;background:#a0a0a0;"></div>
<div style="left:60px;top:743px;width:1px;height:23px;background:#d8d8d8;"></div>
<div style="left:61px;top:743px;width:697px;height:23px;background:#ffffff;"></div>
<div style="left:61px;top:743px;width:697px;height:1px;background:#d8d8d8;"></div>
<div style="left:209px;top:743px;width:1px;height:23px;background:#d8d8d8;"></div>
<div style="left:396px;top:743px;width:1px;height:23px;background:#d8d8d8;"></div>
<div style="left:521px;top:743px;width:1px;height:23px;background:#d8d8d8;"></div>
<div style="left:758px;top:743px;width:1px;height:23px;background:#d8d8d8;"></div>
<span class="g" style="left:67.6px;top:744.87px;transform:scaleX(0.9156);">Output</span>
<span class="g" style="left:216.09px;top:744.87px;transform:scaleX(0.9147);">Unchanged</span>
<span class="g" style="left:403.91px;top:744.87px;transform:scaleX(0.895);">456041</span>
<span class="g" style="left:529.0px;top:744.87px;transform:scaleX(0.9303);">Closed with non-monetary relief</span>
<div style="left:17px;top:755px;width:7px;height:1px;background:repeating-linear-gradient(90deg,#a0a0a0 0 1px,transparent 1px 2px)"></div>
<svg style="left:4px;top:749px" width="13" height="13"><rect x="1.5" y="1.5" width="10" height="10" fill="#fff" stroke="#a4a4a4" stroke-width="1.1"/><path d="M3.2 6.5 H9.8 M6.5 3.2 V9.8" stroke="#000" stroke-width="1.55"/></svg>
<div style="left:24px;top:766px;width:36px;height:24px;background:#efefef;"></div>
<div style="left:24px;top:767px;width:36px;height:1px;background:#f8f8f8;"></div>
<div style="left:22.5px;top:766px;width:37.5px;height:1px;background:#a0a0a0;"></div>
<div style="left:60px;top:766px;width:1px;height:24px;background:#d8d8d8;"></div>
<div style="left:61px;top:766px;width:697px;height:24px;background:#f3f3f3;"></div>
<div style="left:61px;top:766px;width:697px;height:1px;background:#d8d8d8;"></div>
<div style="left:209px;top:766px;width:1px;height:24px;background:#d8d8d8;"></div>
<div style="left:396px;top:766px;width:1px;height:24px;background:#d8d8d8;"></div>
<div style="left:521px;top:766px;width:1px;height:24px;background:#d8d8d8;"></div>
<div style="left:758px;top:766px;width:1px;height:24px;background:#d8d8d8;"></div>
<span class="g" style="left:67.6px;top:768.6399999999999px;transform:scaleX(0.9156);">Output</span>
<span class="g" style="left:216.1px;top:768.6399999999999px;transform:scaleX(0.8964);">Updated</span>
<span class="g" style="left:403.91px;top:768.6399999999999px;transform:scaleX(0.895);">474128</span>
<span class="g" style="left:529.0px;top:768.6399999999999px;transform:scaleX(0.9272);">Closed without relief</span>
<div style="left:17px;top:779px;width:7px;height:1px;background:repeating-linear-gradient(90deg,#a0a0a0 0 1px,transparent 1px 2px)"></div>
<svg style="left:4px;top:773px" width="13" height="13"><rect x="1.5" y="1.5" width="10" height="10" fill="#fff" stroke="#a4a4a4" stroke-width="1.1"/><path d="M3.2 6.5 H9.8 M6.5 3.2 V9.8" stroke="#000" stroke-width="1.55"/></svg>
<div style="left:24px;top:790px;width:36px;height:24px;background:#efefef;"></div>
<div style="left:24px;top:791px;width:36px;height:1px;background:#f8f8f8;"></div>
<div style="left:22.5px;top:790px;width:37.5px;height:1px;background:#a0a0a0;"></div>
<div style="left:60px;top:790px;width:1px;height:24px;background:#d8d8d8;"></div>
<div style="left:61px;top:790px;width:697px;height:24px;background:#ffffff;"></div>
<div style="left:61px;top:790px;width:697px;height:1px;background:#d8d8d8;"></div>
<div style="left:209px;top:790px;width:1px;height:24px;background:#d8d8d8;"></div>
<div style="left:396px;top:790px;width:1px;height:24px;background:#d8d8d8;"></div>
<div style="left:521px;top:790px;width:1px;height:24px;background:#d8d8d8;"></div>
<div style="left:758px;top:790px;width:1px;height:24px;background:#d8d8d8;"></div>
<span class="g" style="left:67.6px;top:792.41px;transform:scaleX(0.9156);">Output</span>
<span class="g" style="left:216.09px;top:792.41px;transform:scaleX(0.9147);">Unchanged</span>
<span class="g" style="left:403.91px;top:792.41px;transform:scaleX(0.895);">486251</span>
<span class="g" style="left:529.0px;top:792.41px;transform:scaleX(0.9297);">Closed with explanation</span>
<div style="left:17px;top:803px;width:7px;height:1px;background:repeating-linear-gradient(90deg,#a0a0a0 0 1px,transparent 1px 2px)"></div>
<svg style="left:4px;top:797px" width="13" height="13"><rect x="1.5" y="1.5" width="10" height="10" fill="#fff" stroke="#a4a4a4" stroke-width="1.1"/><path d="M3.2 6.5 H9.8 M6.5 3.2 V9.8" stroke="#000" stroke-width="1.55"/></svg>
</body></html>
